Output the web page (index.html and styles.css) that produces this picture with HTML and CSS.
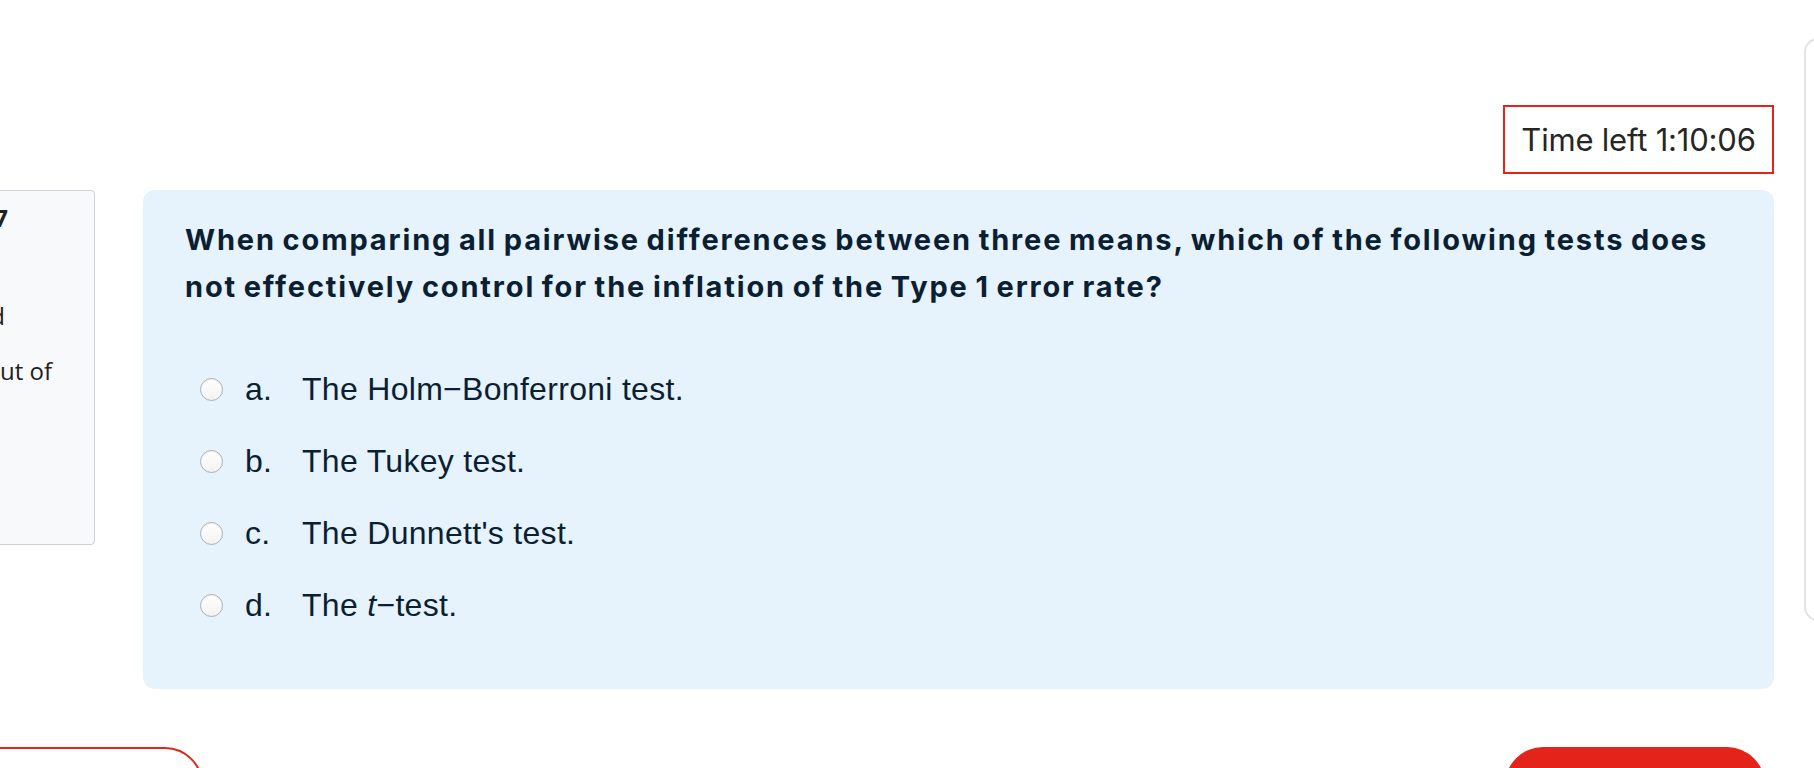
FILE: index.html
```html
<!DOCTYPE html>
<html lang="en">
<head>
<meta charset="utf-8">
<title>Quiz</title>
<link rel="stylesheet" href="styles.css">
</head>
<body>
<div class="layout">
  <div class="content">
    <div class="timer-row">
      <div class="timer">Time left 1:10:06</div>
    </div>
    <div class="question-row">
      <div class="info">
        <div class="info-line info-title">Question 7</div>
        <div class="info-line info-state">Not yet answered</div>
        <div class="info-line info-grade">Marked out of</div>
        <div class="info-line info-grade2">1.00</div>
      </div>
      <div class="card">
        <div class="qtext">When comparing all pairwise differences between three means, which of the following tests does not effectively control for the inflation of the Type 1 error rate?</div>
        <div class="answers">
          <label class="option"><span class="radio"></span><span class="letter">a.</span><span class="otext">The Holm−Bonferroni test.</span></label>
          <label class="option"><span class="radio"></span><span class="letter">b.</span><span class="otext">The Tukey test.</span></label>
          <label class="option"><span class="radio"></span><span class="letter">c.</span><span class="otext">The Dunnett's test.</span></label>
          <label class="option"><span class="radio"></span><span class="letter">d.</span><span class="otext">The <em>t</em>−test.</span></label>
        </div>
      </div>
    </div>
    <div class="nav-row">
      <div class="btn btn-outline">Previous page</div>
      <div class="btn btn-fill">Next page</div>
    </div>
  </div>
  <div class="drawer"></div>
</div>
</body>
</html>
```
FILE: styles.css
```css
html, body {
  margin: 0;
  padding: 0;
  background: #ffffff;
}
body {
  width: 1814px;
  height: 768px;
  overflow: hidden;
}
.layout {
  display: flex;
  align-items: flex-start;
}
.content {
  width: 1774px;
  flex: none;
  padding-top: 105px;
}
.drawer {
  flex: none;
  margin-left: 30px;
  margin-top: 38px;
  width: 40px;
  height: 579px;
  border: 2px solid #e3e3e3;
  border-right: none;
  border-radius: 14px 0 0 14px;
  background: #ffffff;
}
.timer-row {
  display: flex;
  justify-content: flex-end;
}
.timer {
  box-sizing: border-box;
  width: 271px;
  height: 69px;
  border: 2px solid #e1251b;
  display: flex;
  align-items: center;
  justify-content: center;
  font-family: "Inter", "DejaVu Sans", sans-serif;
  font-size: 31px;
  color: #262626;
  letter-spacing: -0.2px;
}
.question-row {
  display: flex;
  align-items: flex-start;
  margin-top: 16px;
}
.info {
  box-sizing: border-box;
  flex: none;
  width: 300px;
  height: 355px;
  margin-left: -205px;
  margin-right: 48px;
  background: #f8f9fa;
  border: 1px solid #cdd2d8;
  border-radius: 4px;
  padding-top: 12px;
  font-family: "Open Sans", "DejaVu Sans", sans-serif;
  color: #1d2125;
  text-align: right;
}
.info-line {
  white-space: nowrap;
}
.info-title {
  font-size: 24px;
  font-weight: 700;
  line-height: 30px;
  padding-right: 86px;
}
.info-state {
  font-size: 24px;
  line-height: 33px;
  margin-top: 66px;
  padding-right: 89px;
}
.info-grade {
  font-size: 24px;
  line-height: 33px;
  margin-top: 22px;
  padding-right: 42px;
}
.info-grade2 {
  font-size: 24px;
  line-height: 33px;
  padding-right: 160px;
}
.card {
  box-sizing: border-box;
  flex: 1;
  height: 499px;
  background: #e6f2fc;
  border-radius: 12px;
  padding: 26px 42px 0 42px;
  color: #0b1f33;
}
.qtext {
  font-family: "Inter", "DejaVu Sans", sans-serif;
  font-weight: 700;
  font-size: 29px;
  line-height: 47px;
  letter-spacing: 1.85px;
  word-spacing: -2px;
}
.answers {
  margin-top: 43px;
  display: flex;
  flex-direction: column;
}
.option {
  display: flex;
  align-items: center;
  height: 72px;
  padding-left: 15px;
  font-family: "Liberation Sans", Arial, sans-serif;
  font-size: 32px;
  letter-spacing: 0.3px;
  color: #0b1f33;
}
.radio {
  box-sizing: border-box;
  flex: none;
  width: 23px;
  height: 23px;
  border-radius: 50%;
  border: 1px solid #b0b0b0;
  background: linear-gradient(#ffffff, #f2f2f2);
  box-shadow: inset 0 1px 1px rgba(0,0,0,0.06);
  margin-right: 22px;
}
.letter {
  width: 57px;
  flex: none;
}
.otext em {
  font-style: italic;
}
.nav-row {
  display: flex;
  justify-content: space-between;
  margin-top: 58px;
}
.btn {
  box-sizing: border-box;
  width: 260px;
  height: 80px;
  border-radius: 38px;
  font-family: "Inter", sans-serif;
  font-size: 22px;
  display: flex;
  align-items: flex-end;
  justify-content: center;
  padding-bottom: 10px;
}
.btn-outline {
  margin-left: -57px;
  border: 2px solid #e1251b;
  color: #e1251b;
}
.btn-fill {
  margin-right: 9px;
  background: #e4231b;
  color: #ffffff;
}
```
